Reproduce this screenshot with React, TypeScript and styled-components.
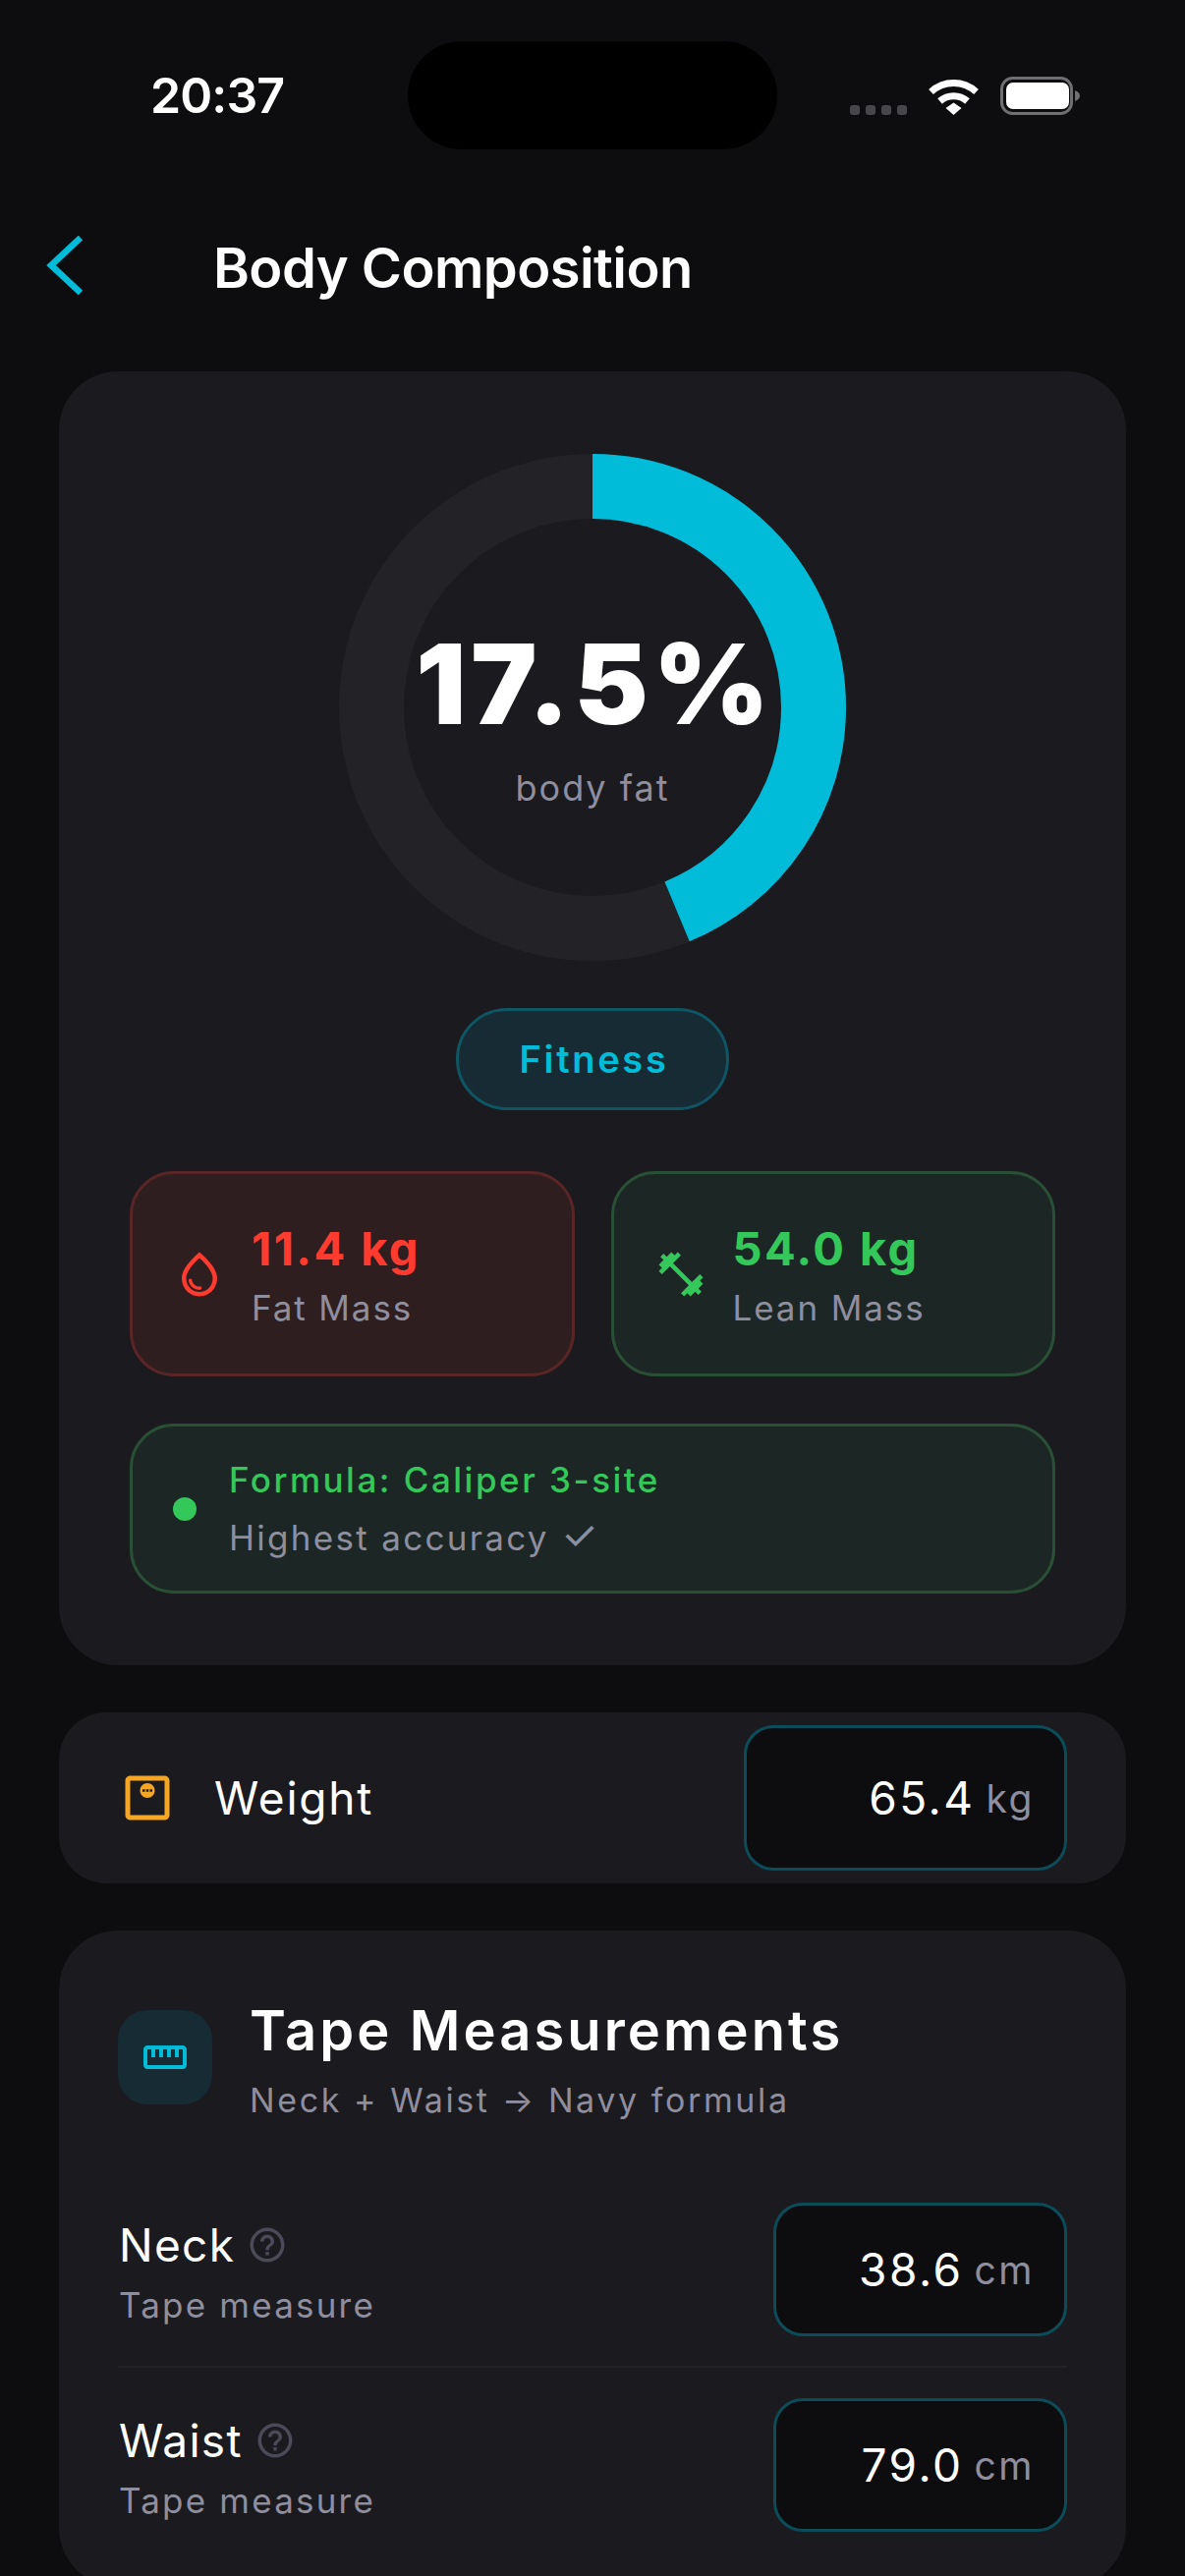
import React from "react";
import styled, { createGlobalStyle } from "styled-components";
import { MdFitnessCenter, MdHelpOutline, MdOutlineMonitorWeight, MdOutlineStraighten, MdOutlineWaterDrop } from "react-icons/md";

const CYAN = "#00bcd9";
const GREEN = "#34c759";
const RED = "#ff3b30";
const MUTED = "#8e8e9f";

const GlobalStyle = createGlobalStyle`
  html, body {
    margin: 0;
    padding: 0;
    background: #0d0d0f;
  }
  * { box-sizing: border-box; }
`;

const Screen = styled.div`
  width: 1206px;
  height: 2622px;
  overflow: hidden;
  background: #0d0d0f;
  color: #fff;
  font-family: Inter, "Liberation Sans", sans-serif;
`;

const StatusBar = styled.div`
  display: grid;
  grid-template-columns: 1fr 376px 1fr;
  height: 110px;
  margin-top: 42px;
`;

const Time = styled.div`
  padding-left: 153px;
  padding-top: 25px;
  font-size: 50px;
  line-height: 60px;
  font-weight: 600;
  letter-spacing: -0.9px;
`;

const Island = styled.div`
  background: #000;
  border-radius: 55px;
`;

const StatusIcons = styled.div`
  display: flex;
  align-items: flex-end;
  padding: 36px 0 35px 74px;
`;

const SignalDots = styled.div`
  display: flex;
  gap: 6px;
  margin-right: 22px;
`;

const SignalDot = styled.span`
  width: 10px;
  height: 10px;
  border-radius: 3px;
  background: #48484c;
`;

const NavBar = styled.div`
  display: flex;
  align-items: center;
  height: 60px;
  margin-top: 88px;
  padding-left: 47px;
`;

const Title = styled.h1`
  margin: 6px 0 0 133px;
  font-size: 56px;
  line-height: 60px;
  font-weight: 600;
  letter-spacing: -0.55px;
`;

const Content = styled.div`
  display: flex;
  flex-direction: column;
  gap: 48px;
  margin-top: 78px;
  padding: 0 60px;
`;

const Card = styled.section`
  background: #1a1a1f;
  border-radius: 60px;
`;

const SummaryCard = styled(Card)`
  display: flex;
  flex-direction: column;
  align-items: center;
  padding: 84px 72px 73px;
`;

const Ring = styled.div`
  position: relative;
  width: 516px;
  height: 516px;
`;

const RingCenter = styled.div`
  position: absolute;
  inset: 0;
  padding-top: 20px;
  display: flex;
  flex-direction: column;
  align-items: center;
  justify-content: center;
`;

const RingValue = styled.div`
  font-size: 113px;
  line-height: 120px;
  font-weight: 900;
  letter-spacing: 5px;
  margin-right: -5px;
`;

const RingLabel = styled.div`
  font-size: 36px;
  line-height: 44px;
  color: ${MUTED};
  letter-spacing: 2px;
  margin-top: 24px;
`;

const Pill = styled.div`
  display: flex;
  align-items: center;
  justify-content: center;
  width: 278px;
  height: 104px;
  margin-top: 48px;
  padding-left: 3px;
  border: 3px solid #0f5665;
  border-radius: 52px;
  background: #162b33;
  color: ${CYAN};
  font-size: 38px;
  font-weight: 600;
  letter-spacing: 2.7px;
`;

const Stats = styled.div`
  display: grid;
  grid-template-columns: 1fr 1fr;
  gap: 37px;
  width: 100%;
  margin-top: 62px;
`;

const StatCard = styled.div<{ $tone: "red" | "green" }>`
  display: flex;
  align-items: center;
  gap: 26px;
  height: 209px;
  padding-left: 41px;
  border: 3px solid ${({ $tone }) => ($tone === "red" ? "#5a2527" : "#2a4f37")};
  border-radius: 45px;
  background: ${({ $tone }) => ($tone === "red" ? "#2e1e20" : "#1c2725")};
  color: ${({ $tone }) => ($tone === "red" ? RED : GREEN)};
`;

const StatValue = styled.div`
  font-size: 47px;
  line-height: 57px;
  font-weight: 700;
  letter-spacing: 2.4px;
`;

const StatLabel = styled.div`
  font-size: 35px;
  line-height: 42px;
  margin-top: 11px;
  color: ${MUTED};
  letter-spacing: 1.9px;
`;

const Formula = styled.div`
  display: flex;
  align-items: center;
  gap: 33px;
  width: 100%;
  height: 173px;
  margin-top: 48px;
  padding-left: 41px;
  border: 3px solid #2a4f37;
  border-radius: 45px;
  background: #1c2725;
`;

const FormulaDot = styled.span`
  width: 24px;
  height: 24px;
  border-radius: 50%;
  background: ${GREEN};
`;

const FormulaName = styled.div`
  font-size: 35px;
  line-height: 42px;
  font-weight: 500;
  color: ${GREEN};
  letter-spacing: 2.5px;
`;

const FormulaNote = styled.div`
  font-size: 35px;
  line-height: 42px;
  margin-top: 15px;
  color: ${MUTED};
  letter-spacing: 2.3px;
`;

const CheckMark = styled.span`
  font-size: 42px;
  line-height: 42px;
  letter-spacing: 0;
`;

const WeightCard = styled(Card)`
  display: flex;
  align-items: center;
  justify-content: space-between;
  height: 174px;
  padding: 0 60px;
  border-radius: 48px;
`;

const WeightLabel = styled.div`
  display: flex;
  align-items: center;
  gap: 38px;
  font-size: 46px;
  letter-spacing: 1.8px;
`;

const WeightIcon = styled.span`
  display: flex;
  color: #f5a623;
`;

const Field = styled.div<{ $width: number; $height: number }>`
  display: flex;
  align-items: center;
  justify-content: flex-end;
  gap: 11px;
  width: ${({ $width }) => $width}px;
  height: ${({ $height }) => $height}px;
  padding-right: 30px;
  border: 3px solid #0c4c58;
  border-radius: 30px;
  background: #0d0d0f;
  font-size: 46px;
  letter-spacing: 2.5px;
`;

const Unit = styled.span`
  font-size: 39px;
  color: ${MUTED};
  letter-spacing: 2.5px;
`;

const TapeCard = styled(Card)`
  height: 668px;
  padding: 70px 60px 0;
`;

const TapeHeader = styled.div`
  display: flex;
  align-items: flex-start;
  gap: 38px;
  margin-bottom: 52px;
`;

const TapeIcon = styled.div`
  display: flex;
  align-items: center;
  justify-content: center;
  width: 96px;
  height: 96px;
  margin-top: 11px;
  border-radius: 30px;
  background: #162b33;
  color: ${CYAN};
`;

const TapeTitle = styled.div`
  font-size: 56px;
  line-height: 64px;
  font-weight: 600;
  letter-spacing: 3.1px;
`;

const TapeSubtitle = styled.div`
  font-size: 34px;
  line-height: 42px;
  margin-top: 18px;
  color: ${MUTED};
  letter-spacing: 2.6px;
`;

const MeasureRow = styled.div<{ $divided?: boolean }>`
  display: flex;
  align-items: center;
  justify-content: space-between;
  padding: 31px 0 30px;
  border-bottom: ${({ $divided }) => ($divided ? "2px solid #222227" : "none")};
`;

const MeasureText = styled.div`
  padding-top: 3px;
`;

const MeasureLabel = styled.div`
  display: flex;
  align-items: center;
  gap: 12px;
  padding-left: 1px;
  font-size: 46px;
  line-height: 56px;
  letter-spacing: 1.3px;
`;

const HelpIcon = styled.span`
  display: flex;
  color: #4a4a58;
`;

const MeasureHint = styled.div`
  padding-left: 1px;
  margin-top: 12px;
  font-size: 35px;
  line-height: 42px;
  color: ${MUTED};
  letter-spacing: 2.2px;
`;

const measures = [
  { name: "Neck", value: "38.6" },
  { name: "Waist", value: "79.0" },
];

export default function App() {
  return (
    <Screen>
      <GlobalStyle />
      <StatusBar>
        <Time>20:37</Time>
        <Island />
        <StatusIcons>
          <SignalDots>
            <SignalDot />
            <SignalDot />
            <SignalDot />
            <SignalDot />
          </SignalDots>
          <svg width="51" height="37" viewBox="0 0 51 37" fill="none">
            <path d="M2.5 13.5C15.5 1.5 35.5 1.5 48.5 13.5" stroke="#fff" strokeWidth="7" />
            <path d="M11.5 23C19.5 16 31.5 16 39.5 23" stroke="#fff" strokeWidth="7" />
            <path d="M17.5 30L25.5 24.5L33.5 30L25.5 37Z" fill="#fff" />
          </svg>
          <svg width="82" height="39" viewBox="0 0 82 39" style={{ marginLeft: 22 }}>
            <rect x="1.5" y="1.5" width="71" height="36" rx="11" fill="none" stroke="#6f6f71" strokeWidth="3" />
            <rect x="6" y="6" width="64" height="27" rx="7" fill="#fff" />
            <path d="M76 14C79 15 81 17 81 19.5C81 22 79 24 76 25Z" fill="#6f6f71" />
          </svg>
        </StatusIcons>
      </StatusBar>

      <NavBar>
        <svg width="37" height="60" viewBox="0 0 37 60" fill="none">
          <path d="M35 2L5 30L35 58" stroke={CYAN} strokeWidth="6.5" />
        </svg>
        <Title>Body Composition</Title>
      </NavBar>

      <Content>
        <SummaryCard>
          <Ring>
            <svg width="516" height="516" viewBox="0 0 516 516" fill="none">
              <circle cx="258" cy="258" r="225" stroke="#222227" strokeWidth="66" />
              <circle
                cx="258"
                cy="258"
                r="225"
                stroke={CYAN}
                strokeWidth="66"
                pathLength="100"
                strokeDasharray="43.75 100"
                transform="rotate(-90 258 258)"
              />
            </svg>
            <RingCenter>
              <RingValue>17.5%</RingValue>
              <RingLabel>body fat</RingLabel>
            </RingCenter>
          </Ring>
          <Pill>Fitness</Pill>
          <Stats>
            <StatCard $tone="red">
              <MdOutlineWaterDrop size={54} />
              <div>
                <StatValue>11.4 kg</StatValue>
                <StatLabel>Fat Mass</StatLabel>
              </div>
            </StatCard>
            <StatCard $tone="green">
              <MdFitnessCenter size={54} />
              <div>
                <StatValue>54.0 kg</StatValue>
                <StatLabel>Lean Mass</StatLabel>
              </div>
            </StatCard>
          </Stats>
          <Formula>
            <FormulaDot />
            <div>
              <FormulaName>Formula: Caliper 3-site</FormulaName>
              <FormulaNote>
                Highest accuracy <CheckMark>✓</CheckMark>
              </FormulaNote>
            </div>
          </Formula>
        </SummaryCard>

        <WeightCard>
          <WeightLabel>
            <WeightIcon>
              <MdOutlineMonitorWeight size={60} />
            </WeightIcon>
            Weight
          </WeightLabel>
          <Field $width={329} $height={148}>
            65.4 <Unit>kg</Unit>
          </Field>
        </WeightCard>

        <TapeCard>
          <TapeHeader>
            <TapeIcon>
              <MdOutlineStraighten size={48} />
            </TapeIcon>
            <div>
              <TapeTitle>Tape Measurements</TapeTitle>
              <TapeSubtitle>Neck + Waist → Navy formula</TapeSubtitle>
            </div>
          </TapeHeader>
          {measures.map((m, i) => (
            <MeasureRow key={m.name} $divided={i === 0}>
              <MeasureText>
                <MeasureLabel>
                  {m.name}
                  <HelpIcon>
                    <MdHelpOutline size={42} />
                  </HelpIcon>
                </MeasureLabel>
                <MeasureHint>Tape measure</MeasureHint>
              </MeasureText>
              <Field $width={299} $height={136}>
                {m.value} <Unit>cm</Unit>
              </Field>
            </MeasureRow>
          ))}
        </TapeCard>
      </Content>
    </Screen>
  );
}
